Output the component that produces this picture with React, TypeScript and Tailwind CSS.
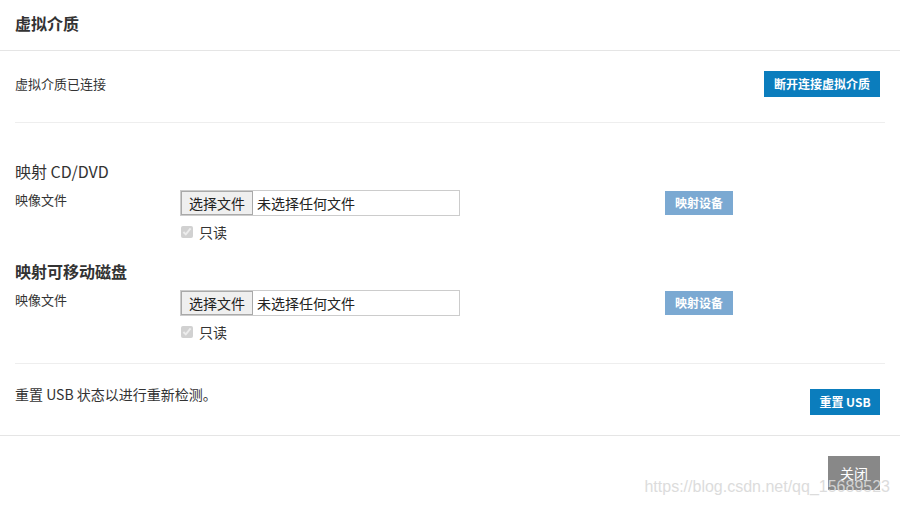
import React from "react"

const font = { fontFamily: '"Noto Sans CJK SC", "Liberation Sans", sans-serif' }

function FileRow() {
    return (
        <div className="flex items-start">
            <div className="w-[165px] text-[13px] leading-[20px] text-[#333]">映像文件</div>
            <div className="w-[485px] flex flex-col">
                <div className="w-[280px] h-[26px] border border-[#cccccc] bg-white flex items-center">
                    <span className="h-[24px] w-[72px] border border-[#a9a9a9] bg-[#efefef] text-[14px] leading-[22px] text-[#222] flex items-center justify-center">
                        选择文件
                    </span>
                    <span className="ml-[4px] text-[14px] leading-[22px] text-[#222]">未选择任何文件</span>
                </div>
                <label className="mt-[6px] flex items-center h-[20px]">
                    <input type="checkbox" checked disabled readOnly className="ml-[1px] w-[12px] h-[12px] m-0" />
                    <span className="ml-[6px] text-[14px] leading-[20px] text-[#333]">只读</span>
                </label>
            </div>
            <button className="mt-[1px] h-[24px] w-[68px] bg-[#7ba9d2] text-white text-[12px] font-bold leading-[24px]">
                映射设备
            </button>
        </div>
    )
}

export default function App() {
    return (
        <div className="relative w-[900px] h-[505px] bg-white overflow-hidden text-[#333]" style={font}>
            {/* header */}
            <div className="h-[51px] border-b border-[#e5e5e5] px-[15px] pt-[12px]">
                <h4 className="text-[16px] leading-[22px] font-bold text-[#333]">虚拟介质</h4>
            </div>

            {/* body */}
            <div className="px-[15px]">
                <div className="flex items-center justify-between pt-[20px] pb-[25px] pr-[5px] border-b border-[#eeeeee]">
                    <span className="text-[13px] leading-[20px]">虚拟介质已连接</span>
                    <button className="h-[26px] w-[116px] bg-[#0b7dbd] text-white text-[12px] font-bold">
                        断开连接虚拟介质
                    </button>
                </div>

                <div className="pt-[37px] pb-[21px] border-b border-[#eeeeee]">
                    <h5 className="text-[16px] leading-[22px] mb-[8px]">映射 CD/DVD</h5>
                    <FileRow />
                    <h5 className="mt-[18px] text-[16px] leading-[22px] font-bold mb-[8px]">映射可移动磁盘</h5>
                    <FileRow />
                </div>

                <div className="flex items-start justify-between pt-[20px] pb-[20px] pr-[5px]">
                    <span className="text-[14px] leading-[20px]">重置 USB 状态以进行重新检测。</span>
                    <button className="mt-[5px] h-[26px] w-[70px] bg-[#0b7dbd] text-white text-[12px] font-bold">
                        重置 USB
                    </button>
                </div>
            </div>

            {/* footer */}
            <div className="border-t border-[#e5e5e5] flex justify-end pt-[20px] pr-[20px]">
                <button className="h-[34px] w-[52px] bg-[#888888] text-white text-[14px]">关闭</button>
            </div>

            <div
                className="absolute right-[10px] top-[476px] text-[16px] leading-[22px] text-[#d9d9d9] opacity-90 pointer-events-none"
                style={{ fontFamily: '"Liberation Sans", Arial, sans-serif' }}
            >
                https://blog.csdn.net/qq_15689523
            </div>
        </div>
    )
}
